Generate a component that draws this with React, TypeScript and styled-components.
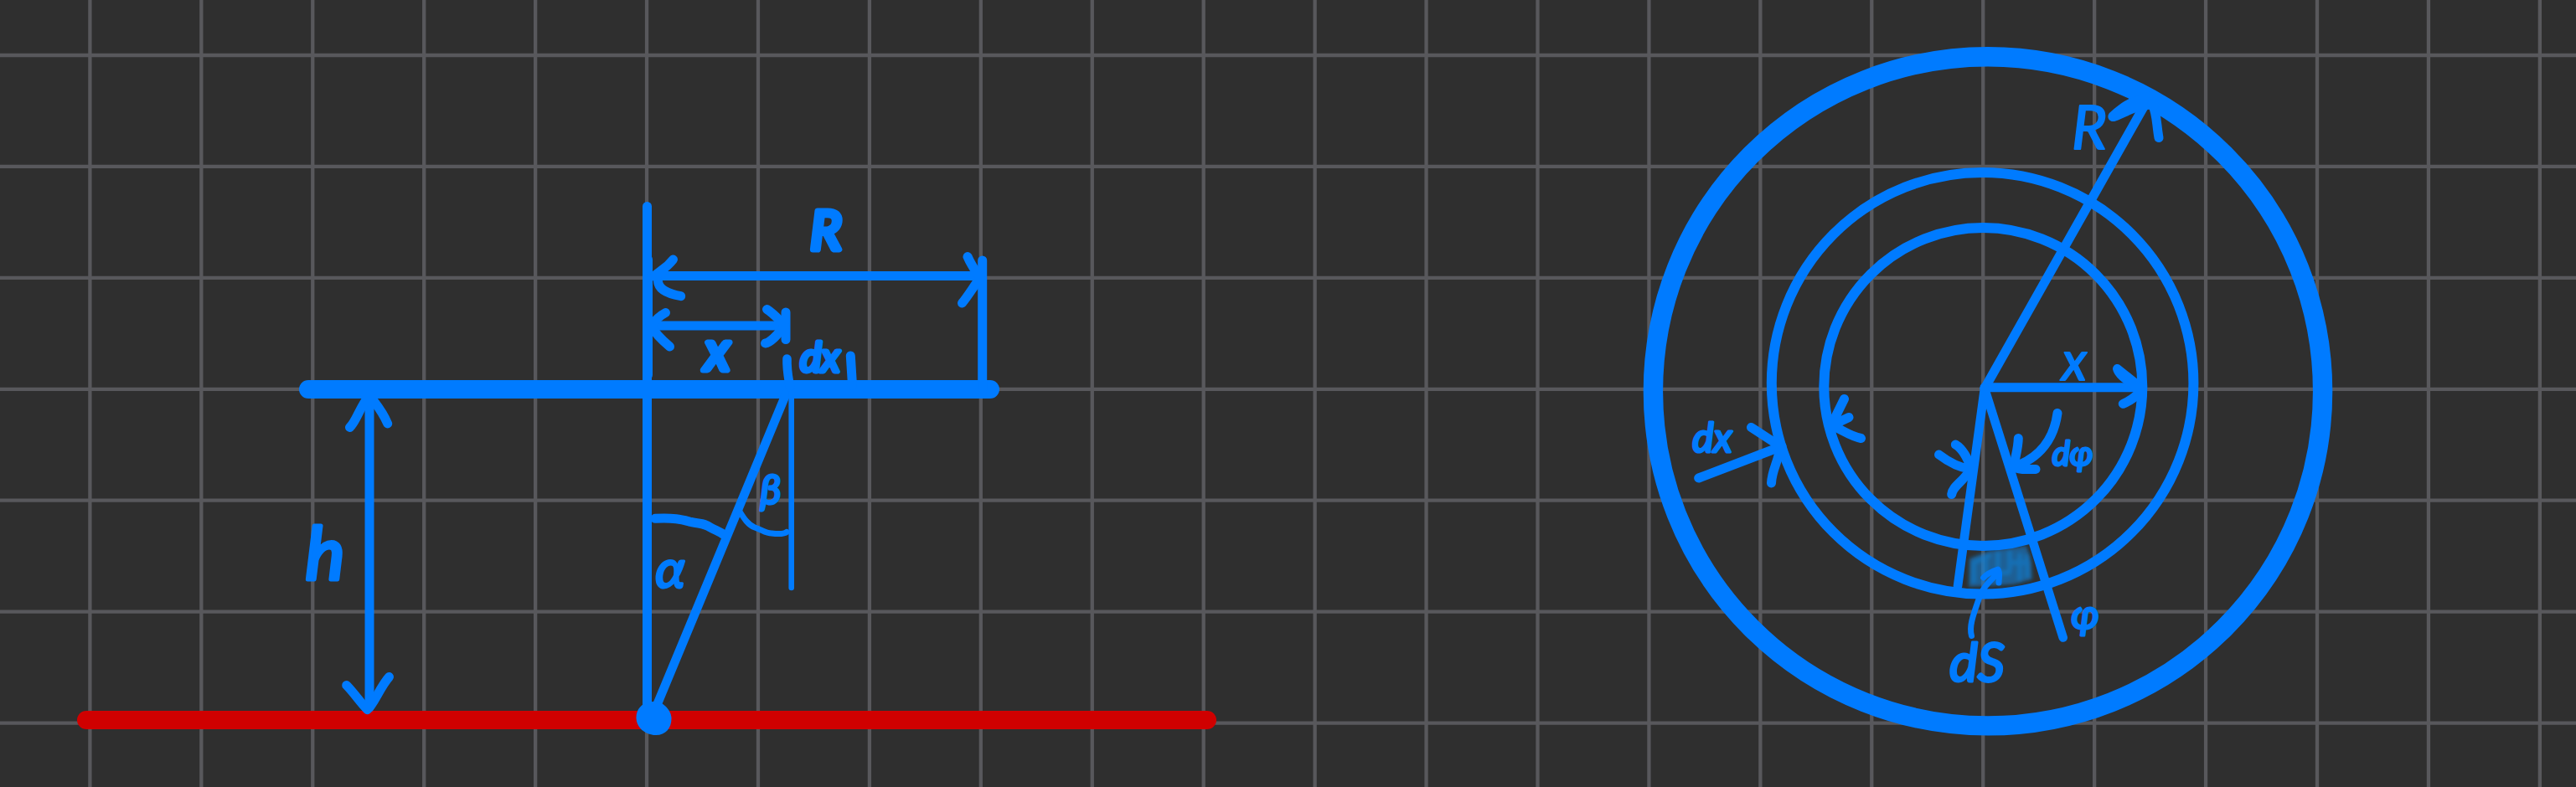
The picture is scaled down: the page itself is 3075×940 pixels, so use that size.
import React from 'react';
import styled, { createGlobalStyle } from 'styled-components';

const ink = '#007bff';
const red = '#d00000';
const paper = '#2f2f2f';
const rule = '#58585c';

const GlobalStyle = createGlobalStyle`
  body {
    margin: 0;
    background: ${paper};
  }
`;

const Sheet = styled.main`
  display: grid;
  grid-template-columns: 1537fr 1538fr;
  background: ${paper};
`;

const Figure = styled.figure`
  margin: 0;
  min-width: 0;
`;

const Drawing = styled.svg`
  display: block;
  width: 100%;
  height: auto;
`;

const Rule = styled.line`
  stroke: ${rule};
  stroke-width: 4.3;
`;

const Stroke = styled.path<{ $width?: number; $color?: string }>`
  fill: none;
  stroke: ${(p) => p.$color ?? ink};
  stroke-width: ${(p) => p.$width ?? 11};
  stroke-linecap: round;
  stroke-linejoin: round;
`;

const Ring = styled.circle<{ $width: number }>`
  fill: none;
  stroke: ${ink};
  stroke-width: ${(p) => p.$width};
`;

const Blob = styled.path`
  fill: ${ink};
`;

const Label = styled.text<{ $size: number; $pen: number }>`
  font-family: Lato, 'Open Sans', sans-serif;
  font-style: italic;
  font-weight: 400;
  font-size: ${(p) => p.$size}px;
  text-anchor: middle;
  fill: ${ink};
  stroke: ${ink};
  stroke-width: ${(p) => p.$pen};
  stroke-linecap: round;
  stroke-linejoin: round;
`;

const PITCH = 132.93;
const columns = Array.from({ length: 23 }, (_, i) => 107.4 + i * PITCH);
const rows = Array.from({ length: 7 }, (_, i) => 66 + i * PITCH);

function GraphPaper({ from, to }: { from: number; to: number }) {
  return (
    <g>
      {columns
        .filter((x) => x > from && x < to)
        .map((x) => (
          <Rule key={x} x1={x} x2={x} y1={0} y2={940} />
        ))}
      {rows.map((y) => (
        <Rule key={y} x1={from} x2={to} y1={y} y2={y} />
      ))}
    </g>
  );
}

function SideView() {
  return (
    <Drawing viewBox="0 0 1537 940" role="img" aria-label="Disc seen from the side">
      <GraphPaper from={0} to={1537} />

      {/* ground and plate */}
      <Stroke $color={red} $width={22} d="M103 860H1441" />
      <Stroke $width={22} d="M368 465H1182" />

      {/* axis, slanted ray and its vertical */}
      <Stroke d="M772.5 246.5V852M773.5 310V448" />
      <Stroke $width={10.6} d="M941 464L778 857" />
      <Stroke $width={6.6} d="M944.7 465V702" />
      <Blob d="M780 838C790 836 801 848 801.5 857C802 869 795 878 783 878C773 878 760 871 759.5 858C759 848 766 838 780 838Z" />

      {/* height */}
      <Stroke d="M441 474V845" />
      <Stroke d="M417.5 510.5C425 504 430 485 441 472C448 482 456 490 462.7 506" />
      <Stroke d="M413.7 818.5C423 828 430 839 438.5 847.5C446 842 454 820 464.5 808.5" />

      {/* radius R */}
      <Stroke d="M778 329.5H1172M1172.7 311V465" />
      <Stroke d="M803.5 310C795 321 788 323 781 330M785.5 336C786 345 797 351 812.7 353.7" />
      <Stroke d="M1155 306.5C1159 316 1164 323 1170 332C1163 341 1156 353 1148.5 362" />

      {/* distance x */}
      <Stroke d="M776 389H938M938 373V405.5" />
      <Stroke d="M794.5 373.5C786 378 781 384 777 389C782 398 790 406 799.5 414" />
      <Stroke d="M915.5 369.5C923 374 930 382 937 389C930 397 921 409 913.5 410" />

      {/* ring width dx */}
      <Stroke $width={10.6} d="M939.5 428.5C939 442 941 450 943 462" />
      <Stroke d="M1015.3 425L1017.5 460" />

      {/* angles */}
      <Stroke d="M782 619.3C806 618 815 621 825 623.5C838 626 841 625 848 630C855 634 860 635 866 640" />
      <Stroke $width={7} d="M883 611C888 619 893 627 901 630C910 633 914 637 921 637C930 638 936 638 939 635.5" />

      <Label x={986} y={298} $size={64} $pen={7}>R</Label>
      <Label x={856} y={442} $size={64} $pen={7}>x</Label>
      <Label x={979} y={444} $size={48} $pen={5}>dx</Label>
      <Label x={388} y={692} $size={88} $pen={5}>h</Label>
      <Label x={800} y={702} $size={64} $pen={3}>α</Label>
      <Label x={920} y={602} $size={48} $pen={3}>β</Label>
    </Drawing>
  );
}

function TopView() {
  return (
    <Drawing viewBox="1537 0 1538 940" role="img" aria-label="Disc seen from above">
      <defs>
        <filter id="soft" x="-20%" y="-20%" width="140%" height="140%">
          <feGaussianBlur stdDeviation="2" />
        </filter>
      </defs>
      <GraphPaper from={1537} to={3075} />

      {/* shaded area element */}
      <g filter="url(#soft)" fill="none" stroke="#0b7fd6" strokeLinecap="round">
        <path
          d="M2351 667L2374 658L2419 652L2425 672L2426 692L2404 698L2350 701Z"
          fill="#0b7fd6"
          fillOpacity={0.6}
          stroke="none"
        />
        <path
          d="M2356 674V694M2370 666V686M2385 661V694M2399 660V680M2411 663V692M2420 664V688M2356 672L2374 664M2382 684H2398M2404 672H2420"
          strokeWidth={6}
          strokeOpacity={0.5}
        />
      </g>

      <Ring cx={2373} cy={467.3} r={399.6} $width={23.4} />
      <Ring cx={2366.6} cy={457.8} r={251.8} $width={12} />
      <Ring cx={2367.3} cy={462} r={190} $width={12} />

      {/* radius R */}
      <Stroke d="M2369 464L2561 124" />
      <Blob d="M2518 135C2526 128 2534 121 2544 117L2570 108L2568 130L2549 134.5C2540 138 2532 142 2524 145C2518 146 2514 140 2518 135Z" />
      <Stroke d="M2577 164.5C2574 148 2575 136 2569 124" />

      {/* distance x */}
      <Stroke d="M2369 462.7H2556" />
      <Stroke d="M2527.5 440.5C2529 448 2541 455 2552 463M2528 441L2553 461M2534.3 482.3C2543 479 2548 475 2556 467" />

      {/* ring width dx */}
      <Stroke d="M2027.7 571L2127 533" />
      <Stroke d="M2090.5 510.5L2125 533C2124 549 2115 561 2114.5 577" />
      <Stroke d="M2201.5 476.5L2186 508C2197 512 2208 521 2221.5 523.5M2207 498.5L2189 507" />

      {/* sector sides */}
      <Stroke $width={10.6} d="M2369 464L2337 700" />
      <Stroke $width={10.6} d="M2369 464L2462.7 761.5" />

      {/* sector angle */}
      <Stroke d="M2334.3 531C2343 536 2348 547 2353 558M2314.5 543C2325 551 2336 558 2351 560M2329.7 590.5C2331 580 2344 575 2351 562" />
      <Stroke d="M2456 493.5C2452 523 2436 547 2403 558M2409.3 523.5C2409 537 2405 547 2404 558C2412 562 2420 560 2430 560.5" />

      {/* pointer to the area element */}
      <Stroke $width={7} d="M2353.5 759.5C2350 748 2356 733 2363 713C2367 701 2376 694 2385 684M2367.7 690C2373 684 2379 682 2385 680C2388 685 2386 690 2386 696" />

      <Label x={2494} y={178} $size={72} $pen={2}>R</Label>
      <Label x={2476} y={454} $size={64} $pen={2}>x</Label>
      <Label x={2044} y={540} $size={48} $pen={3}>dx</Label>
      <Label x={2474} y={556} $size={40} $pen={3}>dφ</Label>
      <Label x={2489} y={751} $size={48} $pen={3}>φ</Label>
      <Label x={2360} y={814} $size={64} $pen={3}>dS</Label>
    </Drawing>
  );
}

export default function App() {
  return (
    <>
      <GlobalStyle />
      <Sheet>
        <Figure>
          <SideView />
        </Figure>
        <Figure>
          <TopView />
        </Figure>
      </Sheet>
    </>
  );
}
